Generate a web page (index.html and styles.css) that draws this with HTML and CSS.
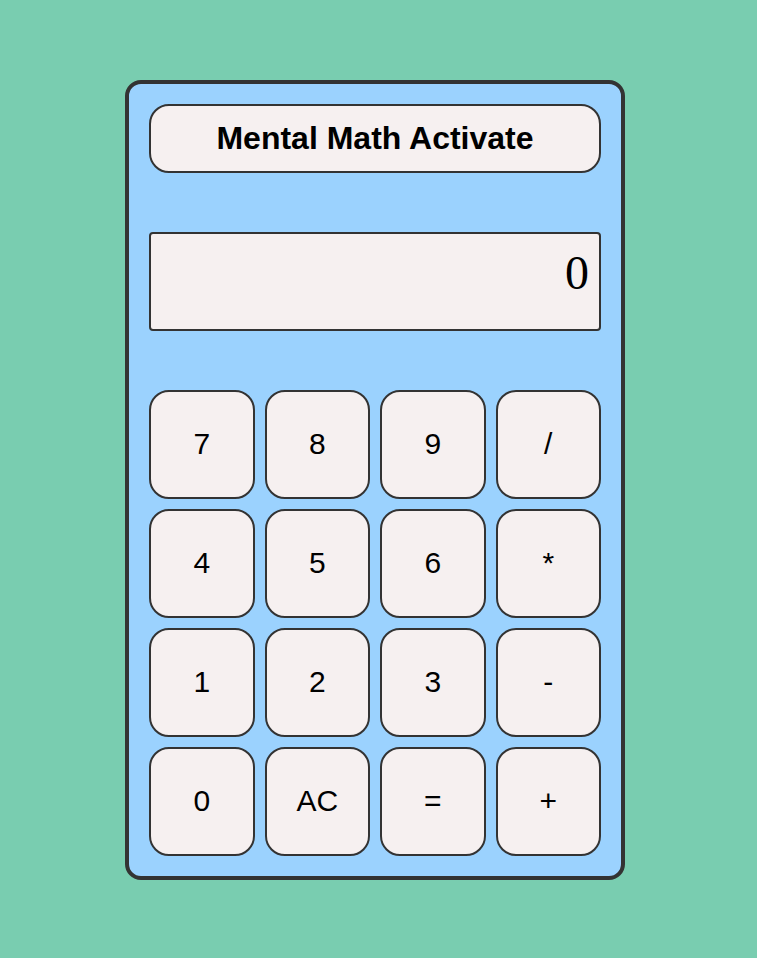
FILE: index.html
```html
<!DOCTYPE html>
<html>
<head>
<meta charset="utf-8">
<link rel="stylesheet" href="styles.css">
</head>
<body>
<div class="calc">
  <div class="title">Mental Math Activate</div>
  <div class="display">0</div>
  <div class="keys">
    <button class="key">7</button>
    <button class="key">8</button>
    <button class="key">9</button>
    <button class="key">/</button>
    <button class="key">4</button>
    <button class="key">5</button>
    <button class="key">6</button>
    <button class="key">*</button>
    <button class="key">1</button>
    <button class="key">2</button>
    <button class="key">3</button>
    <button class="key">-</button>
    <button class="key">0</button>
    <button class="key">AC</button>
    <button class="key">=</button>
    <button class="key">+</button>
  </div>
</div>
</body>
</html>
```
FILE: styles.css
```css
html, body {
  margin: 0;
  padding: 0;
  background: #79cdb0;
  height: 100%;
}
body {
  padding-top: 80px;
  box-sizing: border-box;
  font-family: "Liberation Sans", Arial, sans-serif;
}
.calc {
  width: 500px;
  height: 800px;
  margin: 0 0 0 125px;
  box-sizing: border-box;
  border: 4px solid #333;
  border-radius: 16px;
  background: #9bd2fe;
  padding: 20px;
  display: flex;
  flex-direction: column;
}
.title {
  height: 69px;
  box-sizing: border-box;
  border: 2px solid #333;
  border-radius: 20px;
  background: #f6f0f0;
  display: flex;
  align-items: center;
  justify-content: center;
  font-weight: bold;
  font-size: 32px;
  color: #000;
}
.display {
  margin-top: 59px;
  height: 99px;
  box-sizing: border-box;
  border: 2px solid #333;
  border-radius: 4px;
  background: #f6f0f0;
  font-family: "Liberation Serif", "Times New Roman", serif;
  font-size: 48px;
  text-align: right;
  padding: 11px 10px 0 10px;
  color: #000;
}
.keys {
  margin-top: 59px;
  display: grid;
  grid-template-columns: repeat(4, 1fr);
  grid-auto-rows: 108.5px;
  column-gap: 10px;
  row-gap: 10.5px;
}
.key {
  border: 2px solid #333;
  border-radius: 20px;
  background: #f6f0f0;
  font-family: "Liberation Sans", Arial, sans-serif;
  font-size: 30px;
  color: #000;
  padding: 0;
  margin: 0;
}
```
